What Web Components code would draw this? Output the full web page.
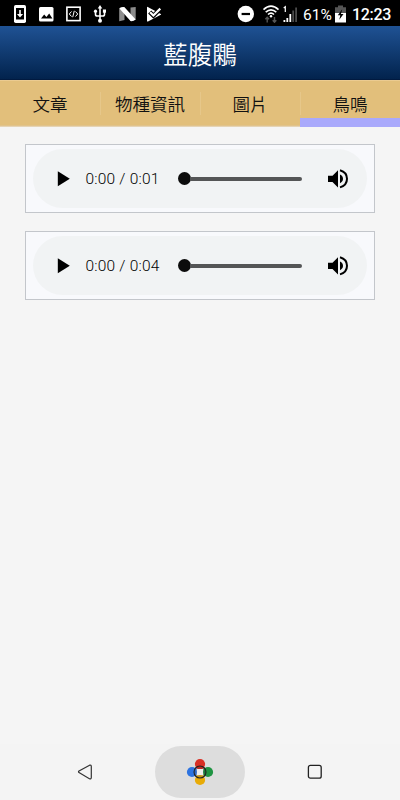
<!DOCTYPE html>
<html lang="zh-Hant">
<head>
<meta charset="utf-8">
<title>藍腹鷴</title>
<style>
  html, body {
    margin: 0;
    height: 100%;
    background: #f5f5f5;
  }
  body {
    font-family: Roboto, "Noto Sans CJK TC", sans-serif;
    overflow: hidden;
  }
</style>
</head>
<body>
<app-screen>
  <status-bar slot="status" battery="61%" time="12:23"></status-bar>
  <title-bar slot="header">藍腹鷴</title-bar>
  <tab-bar slot="header">
    <tab-item>文章</tab-item>
    <tab-item>物種資訊</tab-item>
    <tab-item>圖片</tab-item>
    <tab-item active>鳥鳴</tab-item>
  </tab-bar>
  <audio-card time="0:00 / 0:01"></audio-card>
  <audio-card time="0:00 / 0:04"></audio-card>
  <nav-bar slot="footer"></nav-bar>
</app-screen>

<script>
class AppScreen extends HTMLElement {
  connectedCallback() {
    this.attachShadow({mode: 'open'});
    this.shadowRoot.innerHTML = `
      <style>
        :host {
          display: flex;
          flex-direction: column;
          height: 100vh;
          background: #f5f5f5;
        }
        main {
          flex: 1;
          display: flex;
          flex-direction: column;
          gap: 18px;
          padding: 17px 25px 0;
        }
      </style>
      <slot name="status"></slot>
      <slot name="header"></slot>
      <main><slot></slot></main>
      <slot name="footer"></slot>
    `;
  }
}

class StatusBar extends HTMLElement {
  connectedCallback() {
    this.attachShadow({mode: 'open'});
    this.shadowRoot.innerHTML = `
      <style>
        :host {
          display: flex;
          justify-content: space-between;
          box-sizing: border-box;
          height: 26px;
          padding: 0 9px 0 13px;
          background: #000;
          color: #fff;
        }
        div {
          display: flex;
          align-items: center;
          height: 28px;
        }
        svg {
          display: block;
        }
        .left {
          gap: 12px;
        }
        .battery {
          width: 28px;
          margin: 1px 4px 0 5px;
          font-size: 15.5px;
          white-space: nowrap;
        }
        .time {
          width: 39px;
          margin: 1px 0 0 6px;
          font-size: 16px;
          font-weight: 500;
          letter-spacing: -.3px;
          white-space: nowrap;
        }
      </style>
      <div class="left">
        <svg width="14" height="18" viewBox="0 0 14 18">
          <rect x="1" y="0" width="12" height="18" rx="1.7" fill="#fff"/>
          <path d="M3 3h8v11.500H3z" fill="#000"/>
          <path d="M6.200 5h1.600v4h2.300L7 12.400 3.900 9h2.300z" fill="#fff"/>
        </svg>
        <svg width="15" height="18" viewBox="0 0 15 18">
          <rect y="2" width="14.500" height="14.500" rx="1.500" fill="#fff"/>
          <path d="M2 13.500l3.200-4 2.200 2.500 2.800-3.600 3.200 5.100z" fill="#000"/>
        </svg>
        <svg width="15" height="18" viewBox="0 0 15 18" fill="none" stroke="#fff">
          <rect x=".9" y="2.200" width="13.200" height="13.400" stroke-width="1.600"/>
          <path d="M5.500 6.500L3.300 9l2.200 2.500M9.500 6.500L11.700 9l-2.200 2.500M8.300 5.800L6.700 12.200" stroke-width="1"/>
        </svg>
        <svg width="14" height="18" viewBox="0 0 14 18" fill="#fff">
          <path d="M7 0l2.300 3.400H4.700zM6.200 3h1.600v12H6.200z"/>
          <path d="M2.500 6v3.200q0 1.800 1.800 1.800h5.400q1.800 0 1.800-1.800V6" fill="none" stroke="#fff" stroke-width="1.600"/>
          <circle cx="2.500" cy="6.200" r="1.600"/>
          <path d="M9.900 4.500H13v3.200H9.900z"/>
          <circle cx="7" cy="15.700" r="2"/>
        </svg>
        <svg width="17" height="18" viewBox="0 0 17 18">
          <path d="M.2 4L5.500 2v13L.2 16.300zM11.500 2.500L16.700 2v12.500l-5.200 1.500z" fill="#8c8c8c"/>
          <path d="M.2 3.300Q2.800 1.700 5.500 2.200l11.200 12.400q-2.300 1.900-5.200 1.500z" fill="#fff"/>
        </svg>
        <svg width="16" height="18" viewBox="0 0 16 18" style="margin-left: -2px">
          <path d="M1 2.300q0-.8.800-.4L14.800 9q.6.400 0 .8L2 16.500q-1 .4-1-.5z" fill="#fff"/>
          <path d="M3.700 7l3.700 3.700L14.500 3.600" fill="none" stroke="#000" stroke-width="4.400"/>
          <path d="M4.100 7.200l3.300 3.300L14.300 3.600" fill="none" stroke="#fff" stroke-width="2.200"/>
        </svg>
      </div>
      <div class="right">
        <svg width="17" height="18" viewBox="0 0 17 18">
          <circle cx="8.800" cy="9" r="8.200" fill="#fff"/>
          <path d="M4.600 7.900h8.400v2.200H4.600z" fill="#000"/>
        </svg>
        <svg width="18" height="18" viewBox="0 0 18 18" style="margin-left: 8px" fill="none" stroke="#fff" stroke-width="1.600">
          <path d="M1.500 4.700q7.500-7 15 0M3.700 7.200q5.300-4.800 10.600 0M6 9.500q3-2.600 6 0"/>
          <circle cx="9" cy="11.200" r="1.200" fill="#fff" stroke="none"/>
          <path d="M5.200 17.500v-5M3.400 14.200l1.800-2 1.800 2M12.500 12v5M10.700 15.200l1.800 2 1.800-2" stroke="#555" stroke-width="1.400"/>
        </svg>
        <svg width="15" height="18" viewBox="0 0 15 18" style="margin-left: 3px">
          <path d="M.7 3L2.300 1.700V7" fill="none" stroke="#fff" stroke-width="1.200"/>
          <path d="M.5 15h1.800v2H.5zM3.400 13h1.800v4H3.400zM6.400 9h1.800v8H6.400z" fill="#fff"/>
          <path d="M9.300 5.500h1.800V17H9.300zM12.200 2.500H14V17h-1.800z" fill="#4b4b4b"/>
        </svg>
        <span class="battery">${this.getAttribute('battery')}</span>
        <svg width="11" height="18" viewBox="0 0 11 18">
          <path d="M3 .500h5V2.300h3V9H0V2.300h3z" fill="#555"/>
          <path d="M0 8h11v9.500H0z" fill="#fff"/>
          <path d="M7.200 4.300L2.800 10.300h2.500L4.300 14.800l4.200-5.800H6z" fill="#000"/>
        </svg>
        <span class="time">${this.getAttribute('time')}</span>
      </div>
    `;
  }
}

class TitleBar extends HTMLElement {
  connectedCallback() {
    this.attachShadow({mode: 'open'});
    this.shadowRoot.innerHTML = `
      <style>
        :host {
          display: flex;
          align-items: center;
          justify-content: center;
          box-sizing: border-box;
          height: 54px;
          padding-top: 2px;
          background: linear-gradient(#1f5294, #02234d);
          border-bottom: 1px solid #011a40;
          color: #fff;
          font-size: 24.500px;
          font-weight: 350;
        }
      </style>
      <slot></slot>
    `;
  }
}

class TabBar extends HTMLElement {
  connectedCallback() {
    this.attachShadow({mode: 'open'});
    this.shadowRoot.innerHTML = `
      <style>
        :host {
          display: grid;
          grid-template-columns: repeat(4, 1fr);
          height: 47px;
          background: linear-gradient(#ebcb91 1px, #e2bf7b 1px, #e2bf7b 45px, #dfc79d 46px, #ece1cd);
        }
      </style>
      <slot></slot>
    `;
  }
}

class TabItem extends HTMLElement {
  connectedCallback() {
    this.attachShadow({mode: 'open'});
    this.shadowRoot.innerHTML = `
      <style>
        :host {
          display: flex;
          align-items: center;
          justify-content: center;
          box-sizing: border-box;
          height: 47px;
          background: linear-gradient(#e6c78a, #e6c78a) 0 12px / 1px 23px no-repeat;
          color: #111;
          font-size: 17.500px;
          font-weight: 350;
        }
        :host(:first-child) {
          background: none;
        }
        :host([active]) {
          padding-top: 9px;
          border-bottom: 9px solid #a9a9fb;
        }
      </style>
      <slot></slot>
    `;
  }
}

class AudioCard extends HTMLElement {
  connectedCallback() {
    this.attachShadow({mode: 'open'});
    this.shadowRoot.innerHTML = `
      <style>
        :host {
          display: block;
          box-sizing: border-box;
          height: 69px;
          padding: 4px 7px;
          background: #f8f9fc;
          border: 1px solid #c3c6cb;
        }
        .player {
          display: flex;
          align-items: center;
          box-sizing: border-box;
          height: 59px;
          padding: 0 17px 0 24px;
          border-radius: 30px;
          background: #f1f3f4;
        }
        svg {
          display: block;
          flex: none;
        }
        .time {
          width: 76px;
          margin-left: 15.500px;
          color: #000;
          font-size: 15.500px;
          font-weight: 350;
          letter-spacing: .2px;
          white-space: nowrap;
        }
        .range {
          display: flex;
          align-items: center;
          width: 124px;
          margin-left: 16.500px;
        }
        .thumb {
          width: 13px;
          height: 13px;
          border-radius: 50%;
          background: #0c0c0c;
        }
        .track {
          flex: 1;
          height: 4px;
          margin-left: -1px;
          border-radius: 0 2px 2px 0;
          background: #545556;
        }
        .volume {
          margin-left: 25px;
        }
      </style>
      <div class="player">
        <svg width="13" height="16" viewBox="0 0 13 16"><path d="M.8.300L12.800 7.800 .8 15.300z"/></svg>
        <span class="time">${this.getAttribute('time')}</span>
        <div class="range"><span class="thumb"></span><span class="track"></span></div>
        <svg class="volume" width="22" height="20" viewBox="0 0 22 20">
          <path d="M1 6.700h4.500L11 1.200v17.200l-5.500-5.500H1zM13 5.400q3 1.400 3 4.400t-3 4.400z"/>
          <path d="M13 1.200q7 2 7 8.600T13 18.400" fill="none" stroke="#000" stroke-width="2"/>
        </svg>
      </div>
    `;
  }
}

class NavBar extends HTMLElement {
  connectedCallback() {
    this.attachShadow({mode: 'open'});
    this.shadowRoot.innerHTML = `
      <style>
        :host {
          display: grid;
          grid-template-columns: 140px 90px 140px;
          justify-content: center;
          align-items: center;
          justify-items: center;
          height: 56px;
          background: #f4f4f4;
        }
        .home {
          display: flex;
          align-items: center;
          justify-content: center;
          width: 90px;
          height: 52px;
          border-radius: 26px;
          background: #ddd;
        }
        svg {
          display: block;
        }
      </style>
      <svg width="16" height="16" viewBox="0 0 16 16" fill="none" stroke="#333" stroke-width="1.200">
        <path d="M12.600 1.200L2 7q-1 .8 0 1.600l10.400 6.200q1.900.6 1.900-1.200V2.500q0-1.800-1.700-1.300z"/>
      </svg>
      <div class="home">
        <svg width="28" height="28" viewBox="0 0 28 28">
          <circle cx="14" cy="6" r="5.100" fill="#d93025"/>
          <circle cx="6" cy="14" r="5.100" fill="#2d73e0"/>
          <circle cx="22" cy="14" r="5.100" fill="#1f9442"/>
          <circle cx="14" cy="22" r="5.100" fill="#e8ab07"/>
          <circle cx="14" cy="14" r="4.500" fill="#eee"/>
          <path d="M10 10.400Q14 11.500 18 10.400L16.500 8h-5z" fill="#b92c24"/>
          <path d="M10.400 10Q11.500 14 10.400 18L8 16.500v-5z" fill="#2d66c4"/>
          <path d="M17.600 10q-1.100 4 0 8l2.400-1.500v-5z" fill="#1b7a39"/>
          <path d="M10 17.600q4-1.100 8 0L16.500 20h-5z" fill="#c59210"/>
          <circle cx="14" cy="14" r="6" fill="none" stroke="#222" stroke-width="1.100"/>
        </svg>
      </div>
      <svg width="16" height="16" viewBox="0 0 16 16" fill="none" stroke="#222" stroke-width="1.300">
        <rect x="1.400" y="1.400" width="12.800" height="12.800" rx="2"/>
      </svg>
    `;
  }
}

customElements.define("app-screen", AppScreen);
customElements.define("status-bar", StatusBar);
customElements.define("title-bar", TitleBar);
customElements.define("tab-bar", TabBar);
customElements.define("tab-item", TabItem);
customElements.define("audio-card", AudioCard);
customElements.define("nav-bar", NavBar);
</script>
</body>
</html>
